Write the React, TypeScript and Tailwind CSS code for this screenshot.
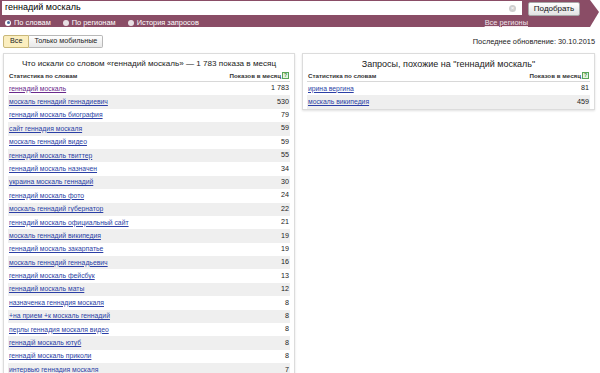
const rows: [string, string][] = [
  ["геннадий москаль", "1 783"],
  ["москаль геннадий геннадиевич", "530"],
  ["геннадий москаль биография", "79"],
  ["сайт геннадия москаля", "59"],
  ["москаль геннадий видео", "59"],
  ["геннадий москаль твиттер", "55"],
  ["геннадий москаль назначен", "34"],
  ["украина москаль геннадий", "30"],
  ["геннадий москаль фото", "24"],
  ["москаль геннадий губернатор", "22"],
  ["геннадий москаль официальный сайт", "21"],
  ["москаль геннадий википедия", "19"],
  ["геннадий москаль закарпатье", "19"],
  ["москаль геннадий геннадьевич", "16"],
  ["геннадий москаль фейсбук", "13"],
  ["геннадий москаль маты", "12"],
  ["назначенка геннадия москаля", "8"],
  ["+на прием +к москаль геннадий", "8"],
  ["перлы геннадия москаля видео", "8"],
  ["геннадій москаль ютуб", "8"],
  ["геннадій москаль приколи", "8"],
  ["интервью геннадия москаля", "7"],
];

const similar: [string, string][] = [
  ["ирина вергина", "81"],
  ["москаль википедия", "459"],
];

function HelpIcon() {
  return (
    <span className="ml-[1px] inline-flex h-[7px] w-[7px] items-center justify-center border border-[#5aa55a] bg-[#e6f4e0] text-[5px] leading-none text-[#3a8a3a]">
      ?
    </span>
  );
}

function StatTable({ title, titleClass, data }: { title: string; titleClass: string; data: [string, string][] }) {
  return (
    <div className="border border-[#dcdcdc] bg-white px-[4px] shadow-[0_1px_2px_rgba(0,0,0,0.12)]">
      <div className={"whitespace-nowrap pt-[4px] text-center leading-[12px] text-[#222] " + titleClass}>{title}</div>
      <div className="mt-[1px] flex h-[11px] items-center justify-between border-b border-[#d8d8d8] px-[1px] text-[6.2px] font-bold text-[#333]">
        <span>Статистика по словам</span>
        <span className="flex items-center">
          Показов в месяц
          <HelpIcon />
        </span>
      </div>
      {data.map(([word, n], i) => (
        <div
          key={i}
          className={
            "flex h-[13.4px] items-center justify-between px-[1px] text-[6.8px] " +
            (i % 2 === 1 ? "bg-[#efefef]" : "bg-white")
          }
        >
          <a className={"underline " + (i === 0 && data.length > 2 ? "text-[#6a2a8c]" : "text-[#2b3fa6]")}>{word}</a>
          <span className="text-[7.2px] text-[#222]">{n}</span>
        </div>
      ))}
    </div>
  );
}

export default function App() {
  return (
    <div className="h-[373px] w-[600px] overflow-hidden bg-white font-['Liberation_Sans',Arial,sans-serif]">
      <div className="h-[27px] bg-[#8a4d66] pl-[2px] pr-[20px] [clip-path:polygon(0_0,590px_0,599px_12px,590px_27px,0_27px)]">
        <div className="flex items-start gap-[6px] pt-[1px]">
          <div className="flex h-[14px] flex-1 items-center justify-between bg-white pl-[3px] pr-[6px]">
            <span className="text-[9px] text-black">геннадий москаль</span>
            <span className="flex h-[7px] w-[7px] items-center justify-center rounded-full bg-[#cfcfcf] text-[6px] leading-none text-white">
              ×
            </span>
          </div>
          <button className="mt-[1px] h-[14px] w-[52px] rounded-[2px] border border-[#a8a8a8] bg-gradient-to-b from-white to-[#e2e2e2] text-[8px] text-[#111]">
            Подобрать
          </button>
        </div>
        <div className="mt-[1px] flex items-center justify-between pr-[52px] text-[7.4px] text-white">
          <div className="flex items-center">
            <span className="ml-[3px] mr-[3px] flex h-[6px] w-[6px] items-center justify-center rounded-full bg-white">
              <span className="h-[3px] w-[3px] rounded-full bg-[#4a6a9a]" />
            </span>
            <span>По словам</span>
            <span className="ml-[12px] mr-[3px] h-[6px] w-[6px] rounded-full bg-[#e8e0e4]" />
            <span>По регионам</span>
            <span className="ml-[12px] mr-[3px] h-[6px] w-[6px] rounded-full bg-[#e8e0e4]" />
            <span>История запросов</span>
          </div>
          <span className="text-[#f2e6ec] underline">Все регионы</span>
        </div>
      </div>

      <div className="mt-[8px] flex items-center justify-between pl-[3px] pr-[5px]">
        <div className="flex h-[13px] text-[7.2px] text-[#222]">
          <span className="flex items-center rounded-l-[2px] border border-[#c9b87a] bg-[#fbeebf] px-[6px]">Все</span>
          <span className="flex items-center rounded-r-[2px] border border-l-0 border-[#b8b8b8] bg-gradient-to-b from-white to-[#e8e8e8] px-[5px]">
            Только мобильные
          </span>
        </div>
        <span className="text-[7.4px] text-[#222]">Последнее обновление: 30.10.2015</span>
      </div>

      <div className="mt-[5px] flex items-start gap-[7px] pl-[3px] pr-[5px]">
        <div className="w-[292px]">
          <StatTable
            title="Что искали со словом «геннадий москаль» — 1 783 показа в месяц"
            titleClass="text-[8.1px]"
            data={rows}
          />
        </div>
        <div className="flex-1 pb-[4px]">
          <StatTable title='Запросы, похожие на "геннадий москаль"' titleClass="text-[9px]" data={similar} />
        </div>
      </div>
    </div>
  );
}
